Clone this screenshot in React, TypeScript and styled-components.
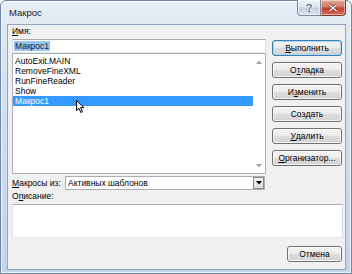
import React from "react";
import styled, { createGlobalStyle } from "styled-components";

const Global = createGlobalStyle`
  html, body { margin: 0; padding: 0; background: #ffffff; }
  body { font-family: "Liberation Sans", Arial, sans-serif; }
  * { box-sizing: border-box; }
`;

const Window = styled.div`
  position: relative;
  width: 352px;
  height: 274px;
  display: flex;
  flex-direction: column;
  border: 1px solid #6f86a3;
  border-radius: 6px 6px 0 0;
  background: linear-gradient(180deg, #e6edf5 0%, #d3e0ee 30%, #c2d5ea 100%);
  box-shadow: inset 0 0 0 1px rgba(255, 255, 255, 0.7);
  font-family: "Liberation Sans", Arial, sans-serif;
  font-size: 8.5px;
  color: #000;
`;

const TitleBar = styled.div`
  height: 23px;
  display: flex;
  align-items: flex-start;
  padding-left: 8px;
  padding-right: 5px;
`;

const Title = styled.div`
  font-size: 9.5px;
  line-height: 23px;
  height: 23px;
  color: #1b1b1b;
  flex: 1;
`;

const CaptionGroup = styled.div`
  display: flex;
  margin-top: -1px;
`;

const CaptionButton = styled.div<{ $close?: boolean }>`
  width: ${(p) => (p.$close ? 25 : 24)}px;
  height: 16px;
  display: flex;
  align-items: center;
  justify-content: center;
  border: 1px solid ${(p) => (p.$close ? "#7c3a33" : "#7e8c9e")};
  border-top: none;
  border-radius: ${(p) => (p.$close ? "0 0 4px 0" : "0 0 0 4px")};
  ${(p) => (p.$close ? "border-left: none;" : "")}
  background: ${(p) =>
    p.$close
      ? "linear-gradient(180deg, #e3a898 0%, #d47a68 45%, #c2412c 55%, #d4705c 100%)"
      : "linear-gradient(180deg, #eef2f7 0%, #dce4ee 45%, #c5d1de 55%, #d9e3ee 100%)"};
  box-shadow: inset 0 0 0 1px rgba(255, 255, 255, 0.45);
`;

const Client = styled.div`
  flex: 1;
  margin: 0 5px 3px 6px;
  border: 1px solid #95a7bd;
  background: #f0f0f0;
  display: flex;
  flex-direction: column;
  padding: 0 3px 0 4px;
`;

const TopArea = styled.div`
  display: grid;
  grid-template-columns: 254px 70px;
  column-gap: 6px;
`;

const LeftCol = styled.div`
  display: flex;
  flex-direction: column;
`;

const Label = styled.div<{ $top: number }>`
  height: 10px;
  line-height: 10px;
  margin-top: ${(p) => p.$top}px;
  white-space: nowrap;
`;

const Accel = styled.span`
  text-decoration: underline;
  text-underline-offset: 1px;
`;

const NameInput = styled.div`
  height: 14px;
  margin-top: 3px;
  background: #fff;
  border: 1px solid #abadb3;
  border-color: #abadb3 #dbdfe6 #e3e9ef #e2e3ea;
  display: flex;
  align-items: center;
  padding-left: 1px;
`;

const Selected = styled.span`
  background: #9cc3ea;
  color: #10243f;
  line-height: 10px;
  padding: 0 1px;
`;

const ListBox = styled.div`
  height: 121px;
  background: #fff;
  border: 1px solid #a9b0b8;
  display: flex;
`;

const Items = styled.div`
  flex: 1;
  padding-top: 2px;
  display: flex;
  flex-direction: column;
`;

const Item = styled.div<{ $sel?: boolean }>`
  height: 10px;
  line-height: 10px;
  padding-left: 2px;
  background: ${(p) => (p.$sel ? "#3399ff" : "transparent")};
  color: ${(p) => (p.$sel ? "#ffffff" : "#000000")};
  white-space: nowrap;
`;

const ScrollTrack = styled.div`
  width: 12px;
  display: flex;
  flex-direction: column;
  justify-content: space-between;
`;

const ScrollBtn = styled.div`
  height: 15px;
  display: flex;
  align-items: center;
  justify-content: center;
`;

const RightCol = styled.div`
  display: flex;
  flex-direction: column;
  gap: 6px;
  padding-top: 15px;
`;

const Button = styled.div<{ $default?: boolean; $left?: boolean }>`
  height: 16px;
  display: flex;
  align-items: center;
  justify-content: ${(p) => (p.$left ? "flex-start" : "center")};
  padding-left: ${(p) => (p.$left ? "5px" : "0")};
  border: 1px solid ${(p) => (p.$default ? "#3c7fb1" : "#707070")};
  border-radius: 3px;
  background: linear-gradient(180deg, #f4f4f4 0%, #ebebeb 48%, #dddddd 52%, #d2d2d2 100%);
  box-shadow: inset 0 0 0 1px
    ${(p) => (p.$default ? "#a7d6f1" : "rgba(255, 255, 255, 0.75)")};
  white-space: nowrap;
  color: #000;
`;

const ComboRow = styled.div`
  display: flex;
  align-items: center;
  margin-top: 2px;
  height: 14px;
`;

const ComboLabel = styled.div`
  width: 53px;
  white-space: nowrap;
`;

const Combo = styled.div`
  width: 200px;
  height: 14px;
  background: #fff;
  border: 1px solid #abadb3;
  display: flex;
  align-items: stretch;
`;

const ComboText = styled.div`
  flex: 1;
  padding-left: 2px;
  line-height: 12px;
  white-space: nowrap;
`;

const DropBtn = styled.div`
  width: 11px;
  border: 1px solid #8a8a8a;
  margin: 0;
  background: linear-gradient(180deg, #f3f3f3, #dcdcdc);
  display: flex;
  align-items: center;
  justify-content: center;
`;

const DescBox = styled.div`
  height: 34px;
  margin-top: 3px;
  width: 331px;
  background: #fff;
  border: 1px solid #abadb3;
  border-color: #abadb3 #dbdfe6 #e3e9ef #e2e3ea;
`;

const Footer = styled.div`
  margin-top: 8px;
  display: flex;
  justify-content: flex-end;
`;

const CancelButton = styled(Button)`
  width: 55px;
`;

const Cursor = styled.svg`
  position: absolute;
  left: 75px;
  top: 99px;
`;

const buttons: { pre: string; acc: string; post: string; def?: boolean }[] = [
  { pre: "", acc: "В", post: "ыполнить", def: true },
  { pre: "О", acc: "т", post: "ладка" },
  { pre: "И", acc: "з", post: "менить" },
  { pre: "Соз", acc: "д", post: "ать" },
  { pre: "", acc: "У", post: "далить" },
  { pre: "", acc: "О", post: "рганизатор..." },
];

const items = ["AutoExit.MAIN", "RemoveFineXML", "RunFineReader", "Show", "Макрос1"];

export default function App() {
  return (
    <>
      <Global />
      <Window>
        <TitleBar>
          <Title>Макрос</Title>
          <CaptionGroup>
            <CaptionButton>
              <svg width="8" height="10" viewBox="0 0 8 10">
                <path
                  d="M1.6 3 C1.6 1.2 6.4 1.2 6.4 3 C6.4 4.6 4 4.6 4 6.4"
                  fill="none"
                  stroke="#ffffff"
                  strokeWidth="2.2"
                />
                <path
                  d="M1.6 3 C1.6 1.2 6.4 1.2 6.4 3 C6.4 4.6 4 4.6 4 6.4"
                  fill="none"
                  stroke="#4d5a6a"
                  strokeWidth="1.1"
                />
                <rect x="3.3" y="7.6" width="1.5" height="1.5" fill="#4d5a6a" />
              </svg>
            </CaptionButton>
            <CaptionButton $close>
              <svg width="10" height="8" viewBox="0 0 10 8">
                <path d="M1.5 1 L8.5 7 M8.5 1 L1.5 7" stroke="#6b2a22" strokeWidth="2.6" />
                <path d="M1.5 1 L8.5 7 M8.5 1 L1.5 7" stroke="#ffffff" strokeWidth="1.5" />
              </svg>
            </CaptionButton>
          </CaptionGroup>
        </TitleBar>
        <Client>
          <TopArea>
            <LeftCol>
              <Label $top={1}>
                <Accel>И</Accel>мя:
              </Label>
              <NameInput>
                <Selected>Макрос1</Selected>
              </NameInput>
              <ListBox>
                <Items>
                  {items.map((it, i) => (
                    <Item key={it} $sel={i === items.length - 1}>
                      {it}
                    </Item>
                  ))}
                </Items>
                <ScrollTrack>
                  <ScrollBtn>
                    <svg width="6" height="4" viewBox="0 0 6 4">
                      <path d="M0 4 L3 0.5 L6 4 Z" fill="#a3a3a3" />
                    </svg>
                  </ScrollBtn>
                  <ScrollBtn>
                    <svg width="6" height="4" viewBox="0 0 6 4">
                      <path d="M0 0 L3 3.5 L6 0 Z" fill="#a3a3a3" />
                    </svg>
                  </ScrollBtn>
                </ScrollTrack>
              </ListBox>
            </LeftCol>
            <RightCol>
              {buttons.map((b) => (
                <Button key={b.pre + b.acc + b.post} $default={b.def}>
                  {b.pre}
                  <Accel>{b.acc}</Accel>
                  {b.post}
                </Button>
              ))}
            </RightCol>
          </TopArea>
          <ComboRow>
            <ComboLabel>
              <Accel>М</Accel>акросы из:
            </ComboLabel>
            <Combo>
              <ComboText>Активных шаблонов</ComboText>
              <DropBtn>
                <svg width="6" height="4" viewBox="0 0 6 4">
                  <path d="M0 0 L6 0 L3 3.5 Z" fill="#000" />
                </svg>
              </DropBtn>
            </Combo>
          </ComboRow>
          <Label $top={1}>
            О<Accel>п</Accel>исание:
          </Label>
          <DescBox />
          <Footer>
            <CancelButton>Отмена</CancelButton>
          </Footer>
        </Client>
        <Cursor width="9" height="14" viewBox="0 0 9 14">
          <path
            d="M0.5 0.5 L0.5 10.5 L3 8.2 L4.8 12.5 L6.4 11.8 L4.7 7.6 L8 7.6 Z"
            fill="#ffffff"
            stroke="#000000"
            strokeWidth="1"
            strokeLinejoin="round"
          />
        </Cursor>
      </Window>
    </>
  );
}
